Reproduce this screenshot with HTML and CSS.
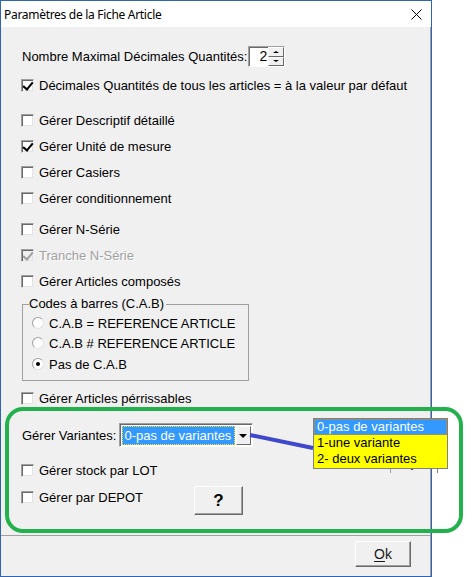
FILE: index.html
```html
<!DOCTYPE html>
<html lang="fr">
<head>
	<meta charset="UTF-8">
	<title>Paramètres de la Fiche Article</title>
	<link rel="stylesheet" href="styles.css">
</head>
<body>
	<div class="page">
		<div class="window">
			<div class="titlebar">
				<span class="title">Paramètres de la Fiche Article</span>
				<svg class="close" width="11" height="11" viewBox="0 0 11 11"><path d="M0.5 0.5L10.5 10.5M10.5 0.5L0.5 10.5" stroke="#000" stroke-width="1"/></svg>
			</div>
			<div class="body">
				<div class="row spin-row">
					<span>Nombre Maximal Décimales Quantités:</span>
					<div class="spin">
						<span class="spin-val">2</span>
						<div class="spin-btns">
							<span class="spin-btn"><i class="tri-up"></i></span>
							<span class="spin-btn"><i class="tri-down"></i></span>
						</div>
					</div>
				</div>
				<label class="row check mt8"><span class="box checked"></span>Décimales Quantités de tous les articles = à la valeur par défaut</label>
				<label class="row check mt15"><span class="box"></span>Gérer Descriptif détaillé</label>
				<label class="row check"><span class="box checked"></span>Gérer Unité de mesure</label>
				<label class="row check"><span class="box"></span>Gérer Casiers</label>
				<label class="row check"><span class="box"></span>Gérer conditionnement</label>
				<label class="row check mt11"><span class="box"></span>Gérer N-Série</label>
				<label class="row check disabled"><span class="box checked"></span>Tranche N-Série</label>
				<label class="row check"><span class="box"></span>Gérer Articles composés</label>

				<fieldset class="group">
					<legend>Codes à barres (C.A.B)</legend>
					<label class="row radio first"><span class="dot"></span>C.A.B = REFERENCE ARTICLE</label>
					<label class="row radio"><span class="dot"></span>C.A.B # REFERENCE ARTICLE</label>
					<label class="row radio mt1"><span class="dot on"></span>Pas de C.A.B</label>
				</fieldset>

				<label class="row check mt7"><span class="box"></span>Gérer Articles pérrissables</label>

				<div class="row variants">
					<span>Gérer Variantes:</span>
					<div class="combo">
						<span class="combo-val">0-pas de variantes</span>
						<span class="combo-btn"><i class="tri-down big"></i></span>
					</div>
				</div>

				<label class="row check mt13"><span class="box"></span>Gérer stock par LOT</label>
				<div class="depot-row">
					<label class="row check"><span class="box"></span>Gérer par DEPOT</label>
					<button class="btn help">?</button>
				</div>

				<div class="separator"></div>
				<div class="footer">
					<button class="btn ok"><u>O</u>k</button>
				</div>
			</div>
		</div>

		<!-- annotations posées par-dessus la fenêtre -->
		<div class="hidden-combo"><i class="tri-down"></i></div>
		<ul class="listbox">
			<li class="sel">0-pas de variantes</li>
			<li>1-une variante</li>
			<li>2- deux variantes</li>
		</ul>
		<svg class="arrow" width="472" height="577"><line x1="250" y1="435" x2="313" y2="448" stroke="#3f48cc" stroke-width="4"/></svg>
		<div class="ring"></div>
	</div>
</body>
</html>
```

FILE: styles.css
```css
*{
	margin: 0;
	padding: 0;
	box-sizing: border-box;
}
body{
	background: #fff;
	font-family: "Liberation Sans", Arial, sans-serif;
	font-size: 13px;
	color: #000;
}
.page{
	position: relative;
	width: 472px;
	height: 577px;
}
.window{
	width: 432px;
	height: 577px;
	border: 1px solid #2f63b3;
	display: flex;
	flex-direction: column;
}
.titlebar{
	height: 26px;
	background: #fff;
	display: flex;
	align-items: center;
	justify-content: space-between;
	padding: 0 9px 0 3px;
	font-family: "Segoe UI", "Noto Sans", sans-serif;
	font-size: 12px;
	letter-spacing: -0.3px;
}
.body{
	flex: 1;
	background: #f0f0f0;
	border-right: 1px solid #a0a0a0;
	padding-left: 20px;
	display: flex;
	flex-direction: column;
}

/* lignes */
.row{
	height: 20px;
	display: flex;
	align-items: center;
	margin-top: 6px;
}
.mt1{ margin-top: 1px; }
.mt7{ margin-top: 7px; }
.mt8{ margin-top: 8px; }
.mt11{ margin-top: 11px; }
.mt13{ margin-top: 13px; }
.mt15{ margin-top: 15px; }

.check .box{
	width: 13px;
	height: 13px;
	margin-right: 5px;
	background: #fff;
	border: 1px solid;
	border-color: #a0a0a0 #f0f0f0 #f0f0f0 #a0a0a0;
	box-shadow: inset 1px 1px 0 #696969, inset -1px -1px 0 #e3e3e3;
	position: relative;
}
.check .box.checked::after{
	content: "";
	position: absolute;
	left: 3px;
	top: 0;
	width: 4px;
	height: 8px;
	border: solid #000;
	border-width: 0 2px 2px 0;
	transform: rotate(40deg);
}
.disabled{
	color: #a0a0a0;
	text-shadow: 1px 1px 0 #fff;
}
.disabled .box{
	background: #f0f0f0;
}
.disabled .box.checked::after{
	border-color: #a0a0a0;
}

/* spinner */
.spin-row{
	height: 21px;
	margin-top: 19px;
	margin-left: 1px;
}
.spin{
	width: 37px;
	height: 21px;
	margin-left: 1px;
	background: #fff;
	border: 1px solid;
	border-color: #a0a0a0 #fff #fff #a0a0a0;
	box-shadow: inset 1px 1px 0 #696969;
	display: flex;
	justify-content: flex-end;
}
.spin-val{
	line-height: 19px;
	padding-right: 1px;
	font-size: 14px;
}
.spin-btns{
	width: 16px;
	display: flex;
	flex-direction: column;
}
.spin-btn{
	flex: 1;
	background: #f0f0f0;
	border: 1px solid;
	border-color: #fff #696969 #696969 #fff;
	display: flex;
	align-items: center;
	justify-content: center;
}
.tri-up{
	border: 3px solid transparent;
	border-top: 0;
	border-bottom: 2px solid #000;
}
.tri-down{
	border: 3px solid transparent;
	border-bottom: 0;
	border-top: 2px solid #000;
}
.tri-down.big{
	border-width: 4px 4px 0;
}

/* groupe */
.group{
	width: 227px;
	margin: 6px 0 0 1px;
	padding: 0 6px 6px;
	border: 1px solid #a0a0a0;
}
.group legend{
	line-height: 14px;
	padding-right: 2px;
}
.radio{
	margin-top: 0;
	margin-left: 3px;
}
.radio.first{
	margin-top: 2px;
}
.radio.mt1{
	margin-top: 1px;
}
.dot{
	width: 12px;
	height: 12px;
	margin-right: 5px;
	border-radius: 50%;
	background: #fff;
	border: 1px solid;
	border-color: #a0a0a0 #e3e3e3 #e3e3e3 #a0a0a0;
	display: flex;
	align-items: center;
	justify-content: center;
}
.dot.on::after{
	content: "";
	width: 4px;
	height: 4px;
	border-radius: 50%;
	background: #000;
}

/* variantes */
.variants{
	height: 24px;
	margin-top: 15px;
	margin-left: 1px;
}
.combo{
	width: 134px;
	height: 24px;
	margin-left: 3px;
	background: #fff;
	border: 1px solid;
	border-color: #a0a0a0 #fff #fff #a0a0a0;
	box-shadow: inset 1px 1px 0 #696969;
	padding: 2px 1px 1px 2px;
	display: flex;
}
.combo-val{
	width: 113px;
	background: #3399ff;
	color: #fff;
	outline: 1px dotted #ffea00;
	outline-offset: -1px;
	line-height: 19px;
	padding-left: 2px;
}
.combo-btn{
	width: 16px;
	margin-left: 1px;
	background: #f0f0f0;
	border: 1px solid;
	border-color: #fff #696969 #696969 #fff;
	display: flex;
	align-items: center;
	justify-content: center;
}

.depot-row{
	height: 30px;
	margin-top: 6px;
	display: flex;
	align-items: flex-start;
}
.depot-row .row{
	margin-top: 1px;
}
.btn{
	font-family: "Liberation Sans", Arial, sans-serif;
	background: #f0f0f0;
	border: 1px solid;
	border-color: #fff #696969 #696969 #fff;
	box-shadow: inset -1px -1px 0 #a0a0a0;
}
.help{
	width: 49px;
	height: 29px;
	margin-left: 51px;
	font-size: 17px;
	font-weight: bold;
}
.separator{
	margin-top: 19px;
	margin-left: -20px;
	border-top: 1px solid #a0a0a0;
}
.footer{
	display: flex;
	justify-content: flex-end;
	padding: 5px 19px 0 0;
}
.ok{
	width: 56px;
	height: 26px;
	font-size: 14px;
	color: #1a1a1a;
}
.ok u{
	text-decoration-thickness: 1px;
	text-underline-offset: 2px;
}

/* annotations */
.listbox{
	position: absolute;
	left: 313px;
	top: 418px;
	width: 135px;
	height: 51px;
	list-style: none;
	background: #ffff00;
	border: 1px solid #808080;
	z-index: 2;
}
.listbox li{
	height: 16px;
	line-height: 16px;
	padding-left: 3px;
	font-size: 13px;
}
.listbox li.sel{
	background: #3399ff;
	color: #fff;
	outline: 1px dotted #e58a00;
	outline-offset: -1px;
}
.hidden-combo{
	position: absolute;
	left: 318px;
	top: 452px;
	width: 120px;
	height: 21px;
	border-right: 1px solid #808080;
	display: flex;
	align-items: flex-end;
	justify-content: flex-end;
	padding: 0 22px 3px 3px;
	z-index: 1;
}
.hidden-combo::after{
	content: "";
	position: absolute;
	left: 72px;
	top: 0;
	bottom: 0;
	border-left: 1px solid #a0a0a0;
}
.arrow{
	position: absolute;
	left: 0;
	top: 0;
	z-index: 3;
}
.ring{
	position: absolute;
	left: 5px;
	top: 407px;
	width: 458px;
	height: 126px;
	border: 4px solid #22b14c;
	border-radius: 18px;
	z-index: 3;
}
```
